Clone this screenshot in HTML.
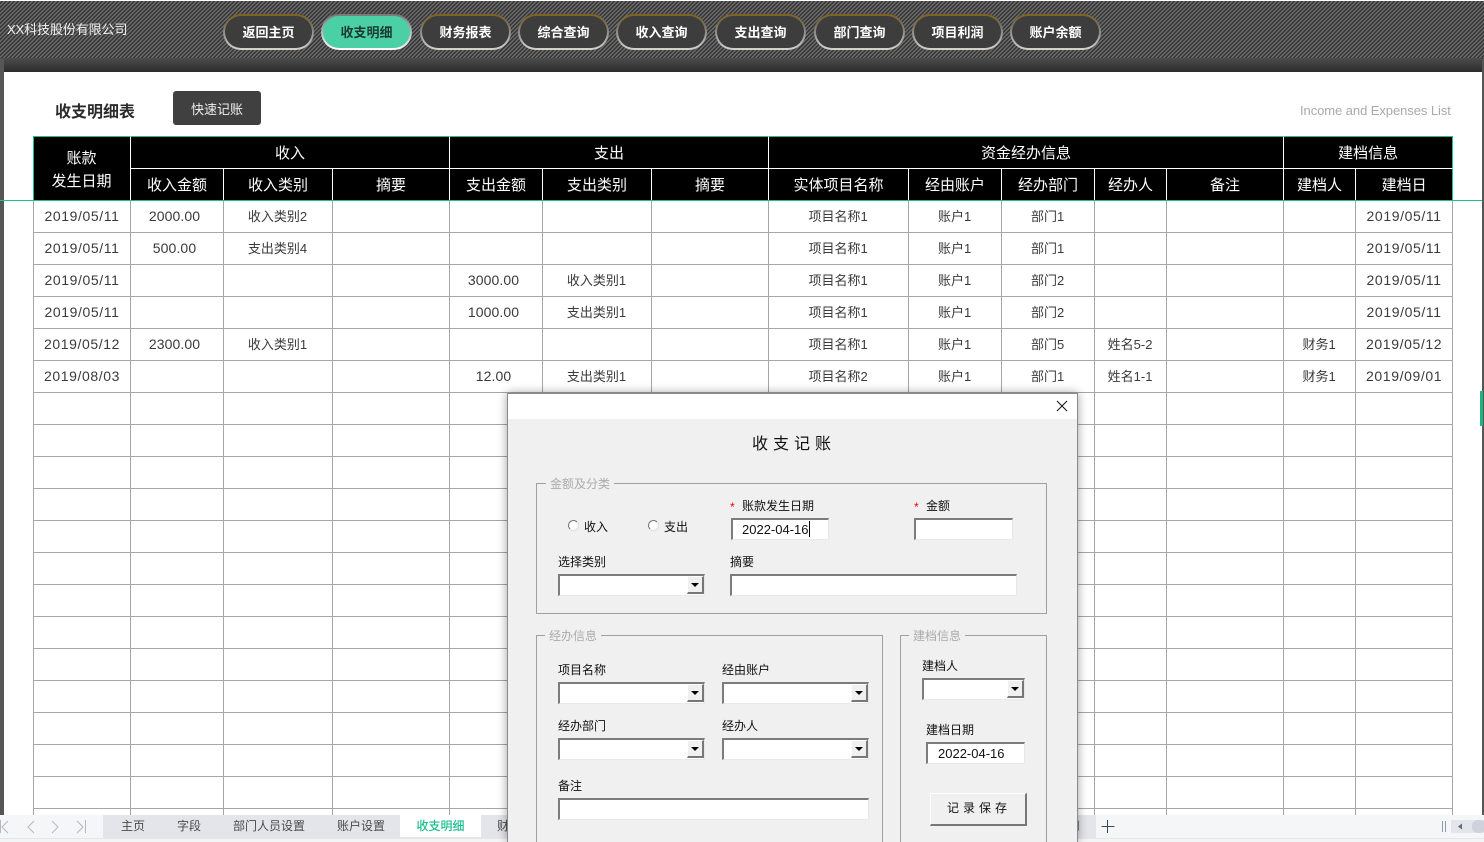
<!DOCTYPE html>
<html lang="zh"><head><meta charset="utf-8"><title>收支明细表</title>
<style>
*{box-sizing:border-box}
html,body{margin:0;padding:0;width:1484px;height:842px;overflow:hidden;background:#fff;font-family:"Liberation Sans","Noto Sans CJK SC",sans-serif;color:#333}
#page{position:relative;width:1484px;height:842px;overflow:hidden;background:#fff}
.a{position:absolute;white-space:nowrap}
#top{position:absolute;left:0;top:1px;width:1484px;height:58px;display:block}
#band{position:absolute;left:0;top:58px;width:1484px;height:14px;background:linear-gradient(#4c4c4c,#2c2c2c)}
.sl{position:absolute;left:0;top:59px;width:4px;height:756px;background:#565656}
.sr{position:absolute;left:1482px;top:59px;width:2px;height:756px;background:#565656}
.nav{position:absolute;top:14px;width:91px;height:36px;border-radius:18px;padding:2px;background:linear-gradient(#80611c,#77705c 30%,#aaa 70%,#d8d4cc)}
.nav span{display:block;height:32px;border-radius:16px;background:#3d3d3d;color:#fff;font-size:13px;font-weight:700;line-height:34px;text-align:center}
.nav.on{background:linear-gradient(#777,#aaa 40%,#fff)}
.nav.on span{background:#4bd0a5;color:#1c3a32}
#tw{position:absolute;left:33px;top:136px;width:1420px;height:679px;overflow:hidden}
table{border-collapse:separate;border-spacing:0;table-layout:fixed;width:1420px}
th{background:#000;color:#fff;font-weight:400;font-size:15px;height:32px;padding:0;border-right:1px solid #fff;border-bottom:1px solid #fff;text-align:center}
tr.h1 th{height:33px;border-top:1px solid #1fc08c}
tr.h2 th{border-bottom:1px solid #1fc08c}
th.f{border-left:1px solid #1fc08c;border-bottom:1px solid #1fc08c;line-height:23px;padding-top:2px;padding-right:1px}
th.l{border-right:1px solid #1fc08c}
td{height:32px;padding:0 1px 2px 0;border-right:1px solid #a6a6a6;border-bottom:1px solid #a6a6a6;text-align:center;font-size:13px;color:#3a3a3a}
td:first-child{border-left:1px solid #a6a6a6}
td.d{font-size:14px;letter-spacing:.6px;padding-right:0}
td.n{font-size:14px;letter-spacing:.1px;padding-right:5px}
#g{position:absolute;left:0;top:200px;width:1482px;height:1px;background:#1fc08c}
#mk{position:absolute;left:1480px;top:391px;width:3px;height:35px;background:#1db57f}
#tabs{position:absolute;left:0;top:815px;width:1484px;height:27px;background:#f5f6f8;font-size:12px;color:#4a4a4a}
#tabs .s{position:absolute;left:103px;top:0;width:993px;height:23px;background:#e4e5ea}
#tabs .b{position:absolute;left:0;top:23px;width:1484px;height:4px;background:#f4f4f4;border-top:1px solid #e6e6e6}
#tabs .on{position:absolute;left:400px;top:0;width:81px;height:22px;background:#fff;color:#1dbf8d;text-align:center;line-height:23px;font-weight:500}
#tabs .t{position:absolute;top:0;line-height:23px;white-space:nowrap}
#dlg{position:absolute;left:507px;top:393px;width:571px;height:449px;background:#f0f0f0;border:1px solid #8a8a8a;border-bottom:0;box-shadow:0 0 9px rgba(0,0,0,.38);font-size:12px;color:#111}
#dlg .tb{position:absolute;left:0;top:0;width:569px;height:25px;background:#fff}
.gb{position:absolute;border:1px solid #a0a0a0}
.lg{position:absolute;background:#f0f0f0;color:#ababab;font-size:12px;padding:0 4px;line-height:16px;white-space:nowrap;margin-top:1px}
.lb{position:absolute;white-space:nowrap;line-height:16px;font-size:12px;color:#111;margin-top:1px}
.ip{position:absolute;height:22px;background:#fff;border-top:2px solid #7c7c7c;border-left:2px solid #7c7c7c;border-right:1px solid #e8e8e8;border-bottom:1px solid #e8e8e8;font-size:13px;line-height:20px;color:#111;white-space:nowrap}
.cb{width:147px}
.cb i{position:absolute;right:0;top:0;width:17px;height:18px;background:#f0f0f0;border-left:1px solid #fff;border-top:1px solid #fff;border-right:2px solid #777;border-bottom:2px solid #777}
.cb i:after{content:"";position:absolute;left:3px;top:6px;border-left:4px solid transparent;border-right:4px solid transparent;border-top:4px solid #000}
.ra{position:absolute;width:11px;height:11px;border-radius:50%;background:#fff;border:1px solid;border-color:#777 #ddd #ddd #777}
.st{position:absolute;color:#e00;font-size:12px;line-height:16px;margin-top:1px}
.btn{position:absolute;left:422px;top:399px;width:97px;height:33px;background:#f0f0f0;border-top:1px solid #fff;border-left:1px solid #fff;border-right:2px solid #777;border-bottom:2px solid #777;text-align:center;line-height:28px;font-size:12px;letter-spacing:4px;padding-left:2px;color:#111}
</style></head><body>
<div id="page">
<svg id="top" width="1484" height="58" shape-rendering="crispEdges"><defs><pattern id="hatch" width="4" height="4" patternUnits="userSpaceOnUse"><rect width="4" height="4" fill="#3a3a3a"/><path d="M3 0h1v1h-1zM0 0h1v1h-1zM2 1h2v1h-2zM1 2h2v1h-2zM0 3h2v1h-2z" fill="#666"/></pattern></defs><rect width="1484" height="58" fill="url(#hatch)"/></svg>
<div id="band"></div>
<div class="sl"></div><div class="sr"></div>
<div class="a" style="left:7px;top:21px;color:#f2f2f2;font-size:13px;line-height:18px;letter-spacing:-.1px">XX科技股份有限公司</div>
<div class="nav" style="left:223px"><span>返回主页</span></div>
<div class="nav on" style="left:321px"><span>收支明细</span></div>
<div class="nav" style="left:420px"><span>财务报表</span></div>
<div class="nav" style="left:518px"><span>综合查询</span></div>
<div class="nav" style="left:616px"><span>收入查询</span></div>
<div class="nav" style="left:715px"><span>支出查询</span></div>
<div class="nav" style="left:814px"><span>部门查询</span></div>
<div class="nav" style="left:912px"><span>项目利润</span></div>
<div class="nav" style="left:1010px"><span>账户余额</span></div>

<div class="a" style="left:55px;top:102px;font-size:16px;font-weight:700;line-height:22px;color:#2b2b2b">收支明细表</div>
<div class="a" style="left:173px;top:91px;width:88px;height:34px;background:#404040;border-radius:3px;color:#eee;font-size:13px;line-height:37px;text-align:center">快速记账</div>
<div class="a" style="left:1300px;top:102px;font-size:13px;line-height:18px;color:#a9a9a9;letter-spacing:-.07px">Income and Expenses List</div>

<div id="tw"><table>
<colgroup><col style="width:98px"><col style="width:93px"><col style="width:109px"><col style="width:117px"><col style="width:93px"><col style="width:109px"><col style="width:117px"><col style="width:140px"><col style="width:93px"><col style="width:93px"><col style="width:72px"><col style="width:117px"><col style="width:72px"><col style="width:97px"></colgroup>
<tr class="h1"><th class="f" rowspan="2" style="border-top:1px solid #1fc08c">账款<br>发生日期</th><th colspan="3">收入</th><th colspan="3">支出</th><th colspan="5">资金经办信息</th><th class="l" colspan="2">建档信息</th></tr>
<tr class="h2"><th>收入金额</th><th>收入类别</th><th>摘要</th><th>支出金额</th><th>支出类别</th><th>摘要</th><th>实体项目名称</th><th>经由账户</th><th>经办部门</th><th>经办人</th><th>备注</th><th>建档人</th><th class="l">建档日</th></tr>
<tr><td class="d">2019/05/11</td><td class="n">2000.00</td><td>收入类别2</td><td></td><td></td><td></td><td></td><td>项目名称1</td><td>账户1</td><td>部门1</td><td></td><td></td><td></td><td class="d">2019/05/11</td></tr>
<tr><td class="d">2019/05/11</td><td class="n">500.00</td><td>支出类别4</td><td></td><td></td><td></td><td></td><td>项目名称1</td><td>账户1</td><td>部门1</td><td></td><td></td><td></td><td class="d">2019/05/11</td></tr>
<tr><td class="d">2019/05/11</td><td></td><td></td><td></td><td class="n">3000.00</td><td>收入类别1</td><td></td><td>项目名称1</td><td>账户1</td><td>部门2</td><td></td><td></td><td></td><td class="d">2019/05/11</td></tr>
<tr><td class="d">2019/05/11</td><td></td><td></td><td></td><td class="n">1000.00</td><td>支出类别1</td><td></td><td>项目名称1</td><td>账户1</td><td>部门2</td><td></td><td></td><td></td><td class="d">2019/05/11</td></tr>
<tr><td class="d">2019/05/12</td><td class="n">2300.00</td><td>收入类别1</td><td></td><td></td><td></td><td></td><td>项目名称1</td><td>账户1</td><td>部门5</td><td>姓名5-2</td><td></td><td>财务1</td><td class="d">2019/05/12</td></tr>
<tr><td class="d">2019/08/03</td><td></td><td></td><td></td><td class="n">12.00</td><td>支出类别1</td><td></td><td>项目名称2</td><td>账户1</td><td>部门1</td><td>姓名1-1</td><td></td><td>财务1</td><td class="d">2019/09/01</td></tr>
<tr><td></td><td></td><td></td><td></td><td></td><td></td><td></td><td></td><td></td><td></td><td></td><td></td><td></td><td></td></tr>
<tr><td></td><td></td><td></td><td></td><td></td><td></td><td></td><td></td><td></td><td></td><td></td><td></td><td></td><td></td></tr>
<tr><td></td><td></td><td></td><td></td><td></td><td></td><td></td><td></td><td></td><td></td><td></td><td></td><td></td><td></td></tr>
<tr><td></td><td></td><td></td><td></td><td></td><td></td><td></td><td></td><td></td><td></td><td></td><td></td><td></td><td></td></tr>
<tr><td></td><td></td><td></td><td></td><td></td><td></td><td></td><td></td><td></td><td></td><td></td><td></td><td></td><td></td></tr>
<tr><td></td><td></td><td></td><td></td><td></td><td></td><td></td><td></td><td></td><td></td><td></td><td></td><td></td><td></td></tr>
<tr><td></td><td></td><td></td><td></td><td></td><td></td><td></td><td></td><td></td><td></td><td></td><td></td><td></td><td></td></tr>
<tr><td></td><td></td><td></td><td></td><td></td><td></td><td></td><td></td><td></td><td></td><td></td><td></td><td></td><td></td></tr>
<tr><td></td><td></td><td></td><td></td><td></td><td></td><td></td><td></td><td></td><td></td><td></td><td></td><td></td><td></td></tr>
<tr><td></td><td></td><td></td><td></td><td></td><td></td><td></td><td></td><td></td><td></td><td></td><td></td><td></td><td></td></tr>
<tr><td></td><td></td><td></td><td></td><td></td><td></td><td></td><td></td><td></td><td></td><td></td><td></td><td></td><td></td></tr>
<tr><td></td><td></td><td></td><td></td><td></td><td></td><td></td><td></td><td></td><td></td><td></td><td></td><td></td><td></td></tr>
<tr><td></td><td></td><td></td><td></td><td></td><td></td><td></td><td></td><td></td><td></td><td></td><td></td><td></td><td></td></tr>
<tr><td></td><td></td><td></td><td></td><td></td><td></td><td></td><td></td><td></td><td></td><td></td><td></td><td></td><td></td></tr>
</table></div>
<div id="g"></div>
<div id="mk"></div>

<div id="tabs">
<div class="s"></div>
<svg style="position:absolute;left:0;top:0" width="103" height="23" fill="none" stroke="#b4b8c2" stroke-width="1"><path d="M8 6l-6 6 6 6M.5 5v13M34 6l-6 6 6 6M52 6l6 6-6 6M77 6l6 6-6 6M85.500 5v13"/></svg>
<div class="t" style="left:121px">主页</div>
<div class="t" style="left:177px">字段</div>
<div class="t" style="left:233px">部门人员设置</div>
<div class="t" style="left:337px">账户设置</div>
<div class="on">收支明细</div>
<div class="t" style="left:497px">财务报表</div>
<div class="t" style="left:1056px">费用</div>
<svg style="position:absolute;left:1100px;top:4px" width="16" height="16" fill="none" stroke="#3a4560" stroke-width="1"><path d="M1.500 7.500h13M7.500 1v13"/></svg>
<svg style="position:absolute;left:1440px;top:5px" width="44" height="16"><path d="M2.500 1v11M5.500 1v11" stroke="#8d99ad" fill="none"/><rect x="11" y="0" width="33" height="13" fill="#e4e5ea"/><path d="M22 3.500v6l-4-3z" fill="#5f6b80"/><rect x="32" y="0" width="14" height="13" rx="6" fill="#cfd2da"/></svg>
<div class="b"></div>
</div>

<div id="dlg">
<div class="tb"></div>
<svg style="position:absolute;left:548px;top:6px" width="12" height="12" fill="none" stroke="#111" stroke-width="1"><path d="M1 1l10 10M11 1L1 11"/></svg>
<div class="lb" style="left:244px;top:40px;font-size:16px;line-height:20px;letter-spacing:5px">收支记账</div>

<div class="gb" style="left:28px;top:89px;width:511px;height:131px"></div>
<div class="lg" style="left:38px;top:81px">金额及分类</div>
<div class="st" style="left:222px;top:104px">*</div>
<div class="lb" style="left:234px;top:103px">账款发生日期</div>
<div class="ip" style="left:223px;top:124px;width:98px;padding-left:9px">2022-04-16<span style="display:inline-block;width:1px;height:16px;background:#000;vertical-align:-3px"></span></div>
<div class="st" style="left:406px;top:104px">*</div>
<div class="lb" style="left:418px;top:103px">金额</div>
<div class="ip" style="left:406px;top:124px;width:99px"></div>
<div class="ra" style="left:60px;top:126px"></div>
<div class="lb" style="left:76px;top:124px">收入</div>
<div class="ra" style="left:140px;top:126px"></div>
<div class="lb" style="left:156px;top:124px">支出</div>
<div class="lb" style="left:50px;top:159px">选择类别</div>
<div class="ip cb" style="left:50px;top:180px"><i></i></div>
<div class="lb" style="left:222px;top:159px">摘要</div>
<div class="ip" style="left:222px;top:180px;width:287px"></div>

<div class="gb" style="left:28px;top:241px;width:347px;height:220px"></div>
<div class="lg" style="left:37px;top:233px">经办信息</div>
<div class="lb" style="left:50px;top:267px">项目名称</div>
<div class="ip cb" style="left:50px;top:288px"><i></i></div>
<div class="lb" style="left:214px;top:267px">经由账户</div>
<div class="ip cb" style="left:214px;top:288px"><i></i></div>
<div class="lb" style="left:50px;top:323px">经办部门</div>
<div class="ip cb" style="left:50px;top:344px"><i></i></div>
<div class="lb" style="left:214px;top:323px">经办人</div>
<div class="ip cb" style="left:214px;top:344px"><i></i></div>
<div class="lb" style="left:50px;top:383px">备注</div>
<div class="ip" style="left:50px;top:404px;width:311px"></div>

<div class="gb" style="left:392px;top:241px;width:147px;height:220px"></div>
<div class="lg" style="left:401px;top:233px">建档信息</div>
<div class="lb" style="left:414px;top:263px">建档人</div>
<div class="ip cb" style="left:414px;top:284px;width:103px"><i></i></div>
<div class="lb" style="left:418px;top:327px">建档日期</div>
<div class="ip" style="left:418px;top:348px;width:99px;padding-left:10px">2022-04-16</div>
<div class="btn">记录保存</div>
</div>
</div>
</body></html>
